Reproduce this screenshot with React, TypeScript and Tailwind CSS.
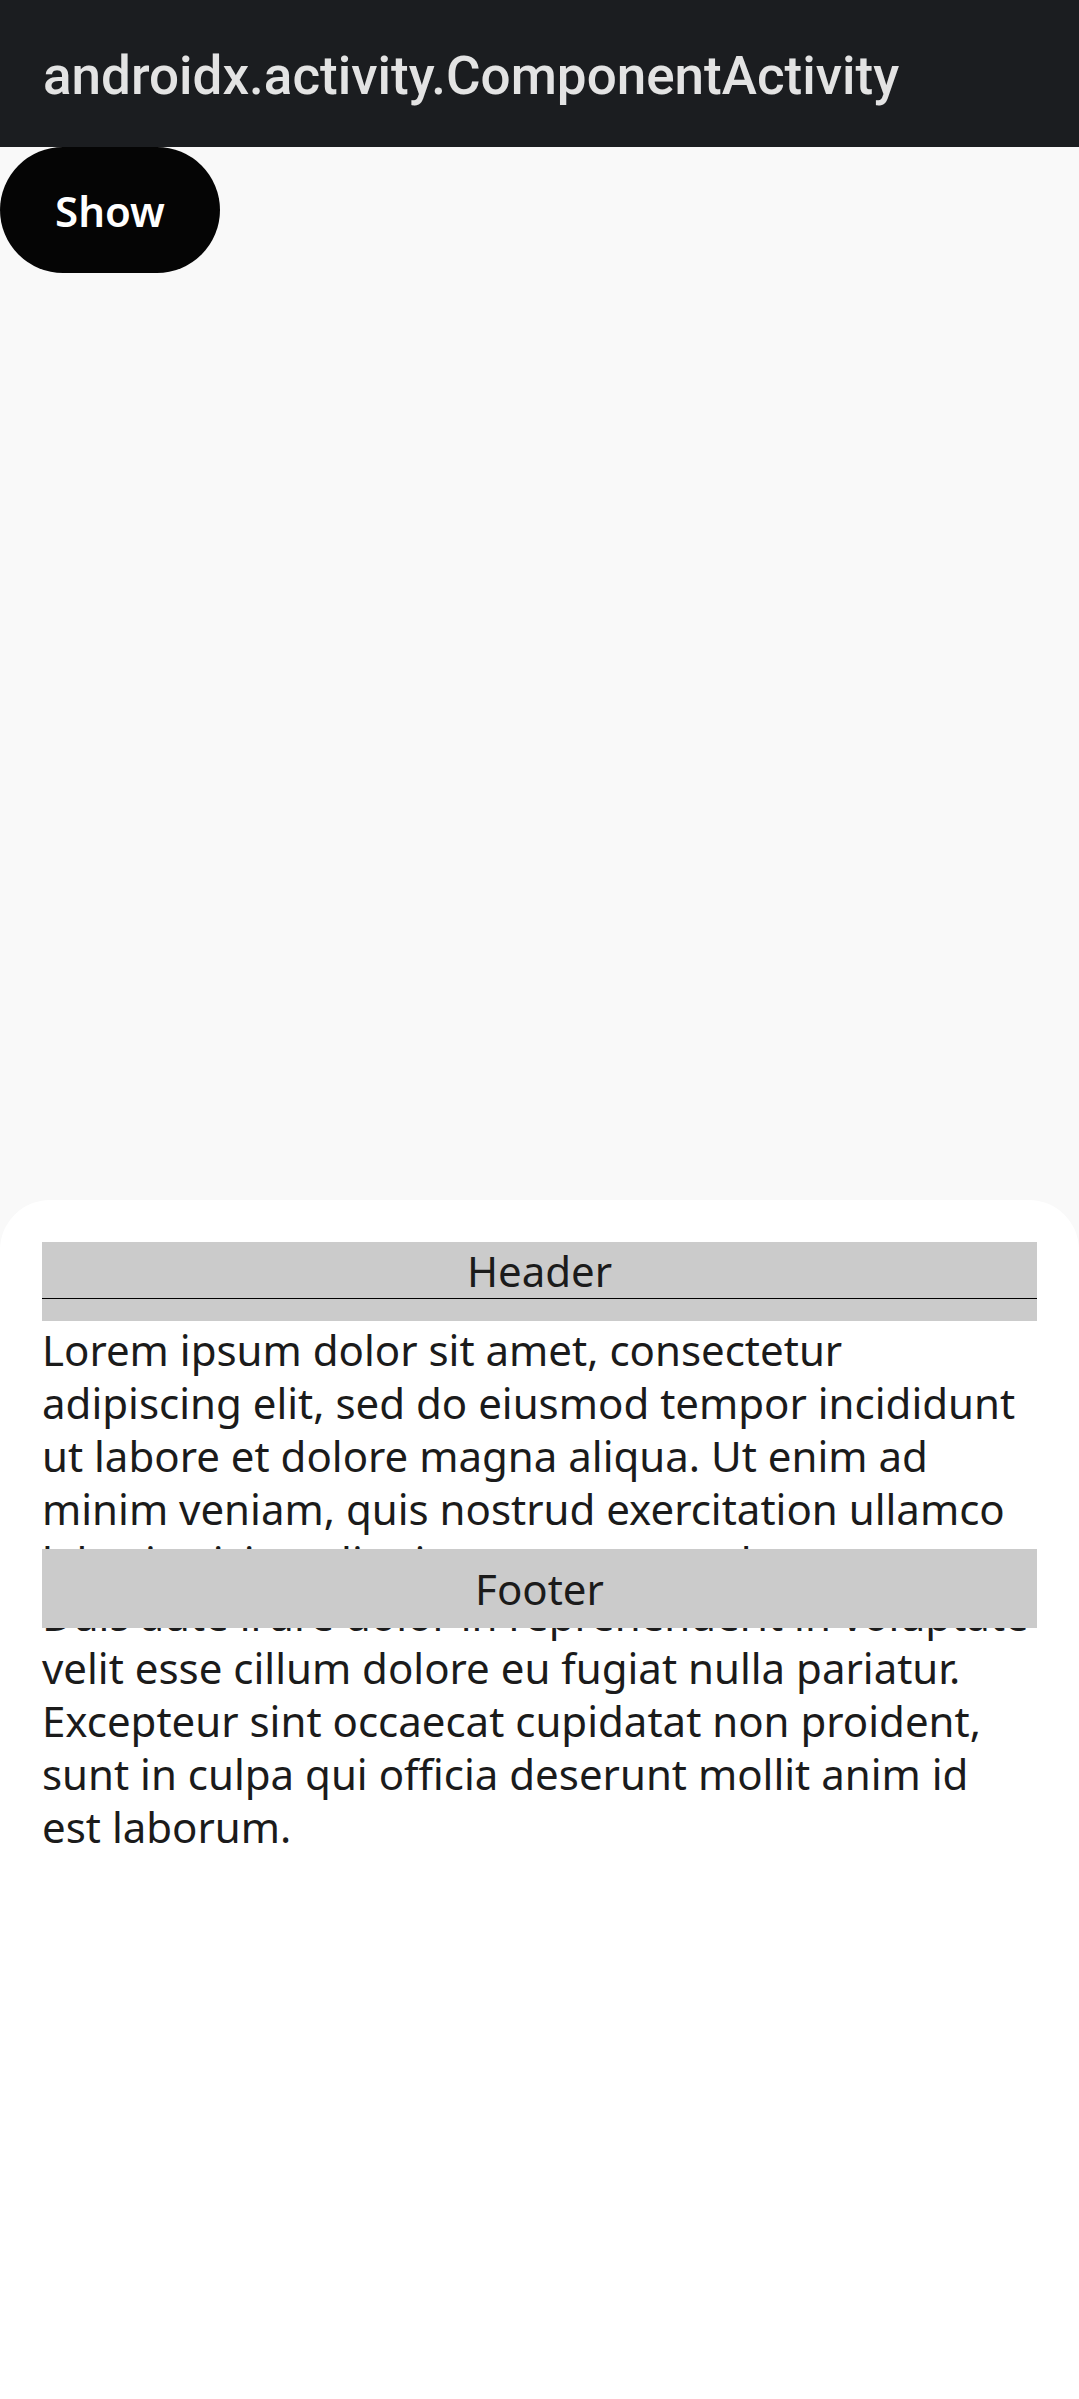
import React from "react";

const lines = [
  "Lorem ipsum dolor sit amet, consectetur",
  "adipiscing elit, sed do eiusmod tempor incididunt",
  "ut labore et dolore magna aliqua. Ut enim ad",
  "minim veniam, quis nostrud exercitation ullamco",
  "laboris nisi ut aliquip ex ea commodo consequat.",
  "Duis aute irure dolor in reprehenderit in voluptate",
  "velit esse cillum dolore eu fugiat nulla pariatur.",
  "Excepteur sint occaecat cupidatat non proident,",
  "sunt in culpa qui officia deserunt mollit anim id",
  "est laborum.",
];

export default function App() {
  return (
    <div className="relative w-[1079px] h-[2399px] overflow-hidden bg-[#f9f9f9] flex flex-col">
      <div className="h-[147px] bg-[#1b1d20] flex items-center pl-[43px] pt-[5px] shrink-0">
        <span
          className="text-[53px] text-[#e3e3e3] font-medium leading-none"
          style={{ fontFamily: "Roboto, sans-serif" }}
        >
          androidx.activity.ComponentActivity
        </span>
      </div>
      <div className="flex">
        <button
          className="h-[126px] w-[220px] rounded-full bg-[#050505] text-white text-[42px] font-semibold flex items-center justify-center"
          style={{ fontFamily: "'Noto Sans', sans-serif" }}
        >
          Show
        </button>
      </div>

      <div
        className="absolute left-0 right-0 top-[1200px] bottom-0 bg-white rounded-t-[50px] px-[42px] pt-[42px] text-[#1b1b1b]"
        style={{ fontFamily: "'Noto Sans', sans-serif" }}
      >
        <div className="h-[79px] bg-[#cbcbcb]">
          <div className="h-[57px] border-b-[1.5px] border-black text-center text-[42px] leading-[57px]">
            Header
          </div>
        </div>
        <div className="mt-[2px] text-[42px] leading-[53px]">
          {lines.map((l) => (
            <div key={l} className="whitespace-nowrap">
              {l}
            </div>
          ))}
        </div>
        <div className="absolute left-[42px] right-[42px] top-[349px] h-[79px] bg-[#cbcbcb] flex items-center justify-center text-[42px]">
          Footer
        </div>
      </div>
    </div>
  );
}
